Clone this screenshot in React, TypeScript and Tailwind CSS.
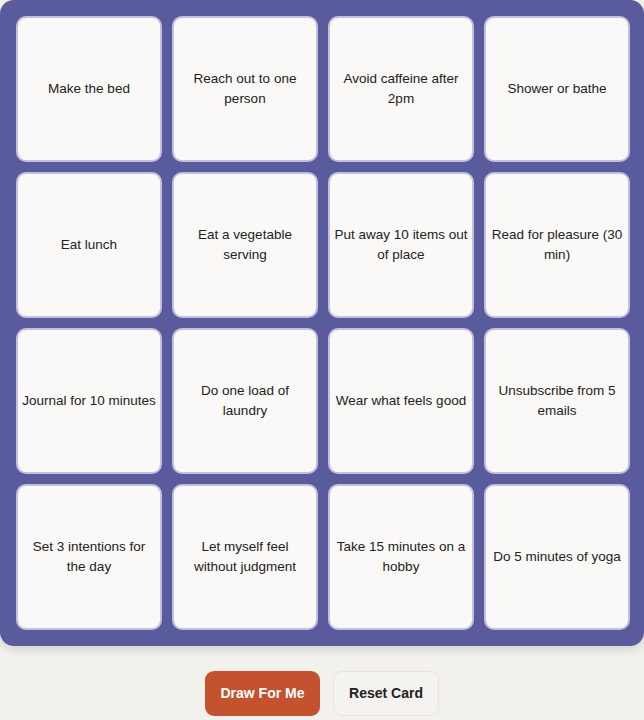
const tasks = [
  'Make the bed',
  'Reach out to one person',
  'Avoid caffeine after 2pm',
  'Shower or bathe',
  'Eat lunch',
  'Eat a vegetable serving',
  'Put away 10 items out of place',
  'Read for pleasure (30 min)',
  'Journal for 10 minutes',
  'Do one load of laundry',
  'Wear what feels good',
  'Unsubscribe from 5 emails',
  'Set 3 intentions for the day',
  'Let myself feel\nwithout judgment',
  'Take 15 minutes on a hobby',
  'Do 5 minutes of yoga',
]

export default function App() {
  return (
    <div className="min-h-screen bg-[#f3f1ec] font-['Liberation_Sans',Arial,sans-serif]">
      <div className="rounded-[14px] bg-[#5a5b9c] py-4 pl-4 pr-[14px] shadow-[0_4px_10px_rgba(0,0,0,0.12)]">
        <div className="grid grid-cols-4 gap-[10px]">
          {tasks.map((t) => (
            <button
              key={t}
              className="flex aspect-square items-center justify-center whitespace-pre-line rounded-[10px] border-2 border-[#c4bfe2] bg-[#faf9f7] px-[4px] text-center text-[13.5px] leading-5 text-[#222]"
            >
              {t}
            </button>
          ))}
        </div>
      </div>
      <div className="mt-[25px] flex justify-center gap-[13px]">
        <button className="h-[45px] w-[115px] rounded-[9px] bg-[#c4522e] text-[14px] font-semibold text-white">
          Draw For Me
        </button>
        <button className="h-[45px] w-[106px] rounded-[9px] border border-[#e6e3dd] bg-[#f5f3ef] text-[14px] font-semibold text-[#222]">
          Reset Card
        </button>
      </div>
    </div>
  )
}
